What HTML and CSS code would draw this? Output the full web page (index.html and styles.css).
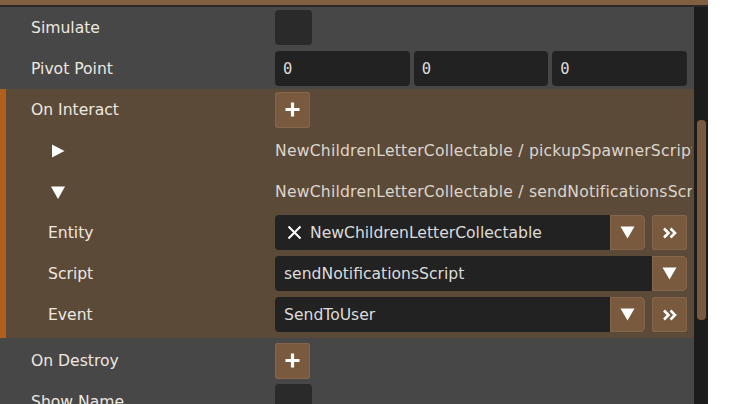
FILE: index.html
```html
<!DOCTYPE html>
<html>
<head>
<meta charset="utf-8">
<link rel="stylesheet" href="styles.css">
</head>
<body>
<div class="window">
  <div class="topbar"></div>
  <div class="body">
    <div class="panel">
      <div class="row">
        <div class="label">Simulate</div>
        <div class="control"><div class="checkbox"></div></div>
      </div>
      <div class="row">
        <div class="label">Pivot Point</div>
        <div class="control">
          <div class="field num">0</div>
          <div class="field num">0</div>
          <div class="field num">0</div>
        </div>
      </div>
      <div class="section">
        <div class="row">
          <div class="label">On Interact</div>
          <div class="control">
            <div class="btn"><svg width="17" height="17" viewBox="0 0 17 17"><path d="M8.5 1.5v14M1.5 8.5h14" stroke="#fff" stroke-width="3.2" fill="none"/></svg></div>
          </div>
        </div>
        <div class="row">
          <div class="label nested"><svg class="tri" width="16" height="16" viewBox="0 0 16 16"><path d="M2 1.5L14.5 8L2 14.5Z" fill="#fff"/></svg></div>
          <div class="path">NewChildrenLetterCollectable / pickupSpawnerScript</div>
        </div>
        <div class="row">
          <div class="label nested"><svg class="tri" width="16" height="16" viewBox="0 0 16 16"><path d="M1 2.5L15 2.5L8 15Z" fill="#fff"/></svg></div>
          <div class="path">NewChildrenLetterCollectable / sendNotificationsScript</div>
        </div>
        <div class="row">
          <div class="label nested">Entity</div>
          <div class="control wide">
            <div class="combo">
              <div class="combo-text"><svg class="x" width="15" height="15" viewBox="0 0 15 15"><path d="M1.5 1.5L13.5 13.5M13.5 1.5L1.5 13.5" stroke="#fff" stroke-width="2" fill="none"/></svg>NewChildrenLetterCollectable</div>
              <div class="btn drop"><svg width="15" height="13" viewBox="0 0 15 13"><path d="M0.5 0.5L14.5 0.5L7.5 12.5Z" fill="#fff"/></svg></div>
            </div>
            <div class="btn go"><svg width="16" height="12" viewBox="0 0 16 12"><path d="M2 1.5L6.5 6L2 10.5M8.5 1.5L13 6L8.5 10.5" stroke="#fff" stroke-width="2.6" fill="none"/></svg></div>
          </div>
        </div>
        <div class="row">
          <div class="label nested">Script</div>
          <div class="control wide">
            <div class="combo">
              <div class="combo-text">sendNotificationsScript</div>
              <div class="btn drop"><svg width="15" height="13" viewBox="0 0 15 13"><path d="M0.5 0.5L14.5 0.5L7.5 12.5Z" fill="#fff"/></svg></div>
            </div>
          </div>
        </div>
        <div class="row">
          <div class="label nested">Event</div>
          <div class="control wide">
            <div class="combo">
              <div class="combo-text">SendToUser</div>
              <div class="btn drop"><svg width="15" height="13" viewBox="0 0 15 13"><path d="M0.5 0.5L14.5 0.5L7.5 12.5Z" fill="#fff"/></svg></div>
            </div>
            <div class="btn go"><svg width="16" height="12" viewBox="0 0 16 12"><path d="M2 1.5L6.5 6L2 10.5M8.5 1.5L13 6L8.5 10.5" stroke="#fff" stroke-width="2.6" fill="none"/></svg></div>
          </div>
        </div>
      </div>
      <div class="row after">
        <div class="label">On Destroy</div>
        <div class="control">
          <div class="btn"><svg width="17" height="17" viewBox="0 0 17 17"><path d="M8.5 1.5v14M1.5 8.5h14" stroke="#fff" stroke-width="3.2" fill="none"/></svg></div>
        </div>
      </div>
      <div class="row">
        <div class="label">Show Name</div>
        <div class="control"><div class="checkbox"></div></div>
      </div>
    </div>
    <div class="scrollbar"><div class="thumb"></div></div>
  </div>
</div>
</body>
</html>
```

FILE: styles.css
```css
html, body {
  margin: 0;
  padding: 0;
  background: #ffffff;
}
.window {
  width: 708px;
  height: 404px;
  overflow: hidden;
  font-family: "DejaVu Sans", "Liberation Sans", sans-serif;
  font-size: 15.6px;
  color: #eee8e0;
}
.topbar {
  height: 5px;
  background: #82603f;
  border-bottom: 2px solid #2c2a28;
}
.body {
  display: flex;
  height: 397px;
}
.panel {
  width: 694px;
  background: #474747;
  overflow: hidden;
}
.scrollbar {
  width: 14px;
  background: #1c1c1c;
  padding-top: 113px;
  box-sizing: border-box;
  display: flex;
  justify-content: center;
}
.thumb {
  width: 9px;
  height: 200px;
  border-radius: 4px;
  background: #7a5a3e;
}
.row {
  display: flex;
  align-items: center;
  height: 41px;
}
.row.after {
  margin-top: 2px;
}
.label {
  width: 275px;
  flex: none;
  padding-left: 31px;
  box-sizing: border-box;
  display: flex;
  align-items: center;
}
.label.nested {
  padding-left: 48px;
}
.tri {
  margin-left: 2px;
}
.control {
  width: 412px;
  display: flex;
  gap: 4px;
  align-items: center;
}
.control.wide {
  gap: 7px;
}
.checkbox {
  width: 37px;
  height: 35px;
  border-radius: 4px;
  background: #2a2a2a;
}
.field {
  flex: 1;
  height: 35px;
  border-radius: 4px;
  background: #222222;
  display: flex;
  align-items: center;
  padding-left: 8px;
  color: #dcdcdc;
}
.num {
  font-family: "DejaVu Sans Mono", monospace;
  font-size: 15.5px;
}
.section {
  background: #5c4a39;
  box-shadow: inset 6px 0 0 #b0601c;
  padding-bottom: 3px;
}
.btn {
  width: 35px;
  height: 36px;
  border-radius: 3px;
  background: #7a5a3e;
  box-shadow: inset 0 0 0 1px #86664a;
  display: flex;
  align-items: center;
  justify-content: center;
  flex: none;
}
.path {
  width: 417px;
  overflow: hidden;
  white-space: nowrap;
  color: #dcd5cc;
  letter-spacing: 0.22px;
}
.combo {
  flex: 1;
  display: flex;
  height: 35px;
  border-radius: 4px;
  background: #222222;
  overflow: hidden;
}
.combo-text {
  flex: 1;
  display: flex;
  align-items: center;
  padding-left: 9px;
  color: #dcdcdc;
  white-space: nowrap;
}
.x {
  margin: 0 8px 0 3px;
}
.btn.drop {
  height: 35px;
  border-radius: 0 4px 4px 0;
}
.btn.go {
  height: 35px;
}
```
